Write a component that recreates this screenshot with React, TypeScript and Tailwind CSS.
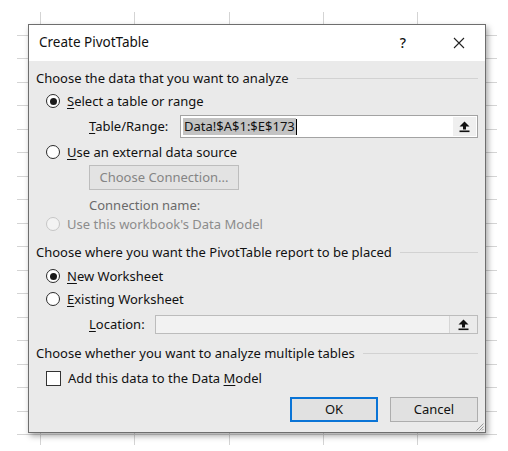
import type { ReactNode } from "react";

const COLS = [24, 94, 95, 94, 94, 79];
const ROWS = Array.from({ length: 19 }, (_, i) => i);

function Radio({ checked = false, disabled = false }: { checked?: boolean; disabled?: boolean }) {
    return (
        <span
            className={`flex h-[14px] w-[14px] shrink-0 items-center justify-center rounded-full ${
                disabled ? "border border-[#c6c6c6] bg-[#f3f3f3]" : "border-[1.5px] border-[#2b2b2b] bg-white"
            }`}
        >
            {checked && <span className="h-[7px] w-[7px] rounded-full bg-[#1a1a1a]" />}
        </span>
    );
}

function Key({ children }: { children: ReactNode }) {
    return <span className="underline decoration-1 underline-offset-[2px]">{children}</span>;
}

function Section({ label, mt }: { label: string; mt: string }) {
    return (
        <div className={`flex h-[18px] items-center gap-2 ${mt}`}>
            <span className="whitespace-nowrap">{label}</span>
            <span className="h-px flex-1 bg-[#d2d2d2]" />
        </div>
    );
}

function UploadIcon() {
    return (
        <svg width="11" height="12" viewBox="0 0 11 12" fill="#111">
            <polygon points="5.5,0.5 10.5,5.5 0.5,5.5" />
            <rect x="4" y="5" width="3" height="3.5" />
            <rect x="0.5" y="9.5" width="10" height="1.6" />
        </svg>
    );
}

export default function App() {
    return (
        <div
            className="relative h-[451px] w-[508px] overflow-hidden bg-white pt-[12px] pl-[17px] text-[13px] leading-none text-[#111]"
            style={{ fontFamily: '"Noto Sans", "Open Sans", sans-serif' }}
        >
            {/* spreadsheet behind the dialog */}
            <div className="grid h-[433px] w-[480px] grid-cols-[24px_94px_95px_94px_94px_79px] auto-rows-[23.5px] overflow-hidden bg-white">
                {ROWS.map((r) =>
                    COLS.map((_, c) => (
                        <div
                            key={`${r}-${c}`}
                            className={`border-b border-[#d4d4d4] ${c < COLS.length - 1 ? "border-r" : ""}`}
                        />
                    ))
                )}
            </div>

            {/* dialog */}
            <div className="absolute top-[24px] left-[28px] flex h-[409px] w-[458px] flex-col border border-[#6e6e6e] bg-[#eaeaea] shadow-[2px_3px_6px_rgba(0,0,0,0.35)]">
                <div className="flex h-[36px] shrink-0 items-center bg-white pl-[10px]">
                    <span className="text-[13.5px]">Create PivotTable</span>
                    <span className="ml-auto mr-[47px] text-[14px] font-medium">?</span>
                    <svg width="12" height="12" viewBox="0 0 12 12" className="mr-[20px]" stroke="#222" strokeWidth="1.1">
                        <path d="M1 1 11 11M11 1 1 11" />
                    </svg>
                </div>

                <div className="flex flex-1 flex-col px-[7px] pt-[8px]">
                    <Section label="Choose the data that you want to analyze" mt="" />

                    <div className="mt-[5px] ml-[10px] flex h-[18px] items-center gap-[7px]">
                        <Radio checked />
                        <span>
                            <Key>S</Key>elect a table or range
                        </span>
                    </div>

                    <div className="mt-[5px] flex h-[23px] items-center pl-[53px]">
                        <span className="w-[91px]">
                            <Key>T</Key>able/Range:
                        </span>
                        <div className="flex h-[23px] flex-1 items-stretch border border-[#a3a3a3] bg-white">
                            <div className="flex flex-1 items-center pl-[2px]">
                                <span className="flex h-[17px] items-center bg-[#c3c3c3] px-[1px] text-[#111]">Data!$A$1:$E$173</span>
                                <span className="h-[16px] w-px bg-black" />
                            </div>
                            <div className="m-[1px] flex w-[23px] items-center justify-center bg-[#efefef]">
                                <UploadIcon />
                            </div>
                        </div>
                    </div>

                    <div className="mt-[5px] ml-[10px] flex h-[18px] items-center gap-[7px]">
                        <Radio />
                        <span>
                            <Key>U</Key>se an external data source
                        </span>
                    </div>

                    <div className="mt-[4px] pl-[53px]">
                        <div className="flex h-[25px] w-[150px] items-center justify-center border border-[#bdbdbd] bg-[#e3e3e3] text-[#858585]">
                            Choose Connection...
                        </div>
                    </div>

                    <div className="mt-[6px] flex h-[18px] items-center pl-[53px] text-[#6a6a6a]">Connection name:</div>

                    <div className="mt-[1px] ml-[10px] flex h-[18px] items-center gap-[7px] text-[#8c8c8c]">
                        <Radio disabled />
                        <span>Use this workbook's Data Model</span>
                    </div>

                    <Section label="Choose where you want the PivotTable report to be placed" mt="mt-[10px]" />

                    <div className="mt-[6px] ml-[10px] flex h-[18px] items-center gap-[7px]">
                        <Radio checked />
                        <span>
                            <Key>N</Key>ew Worksheet
                        </span>
                    </div>

                    <div className="mt-[5px] ml-[10px] flex h-[18px] items-center gap-[7px]">
                        <Radio />
                        <span>
                            <Key>E</Key>xisting Worksheet
                        </span>
                    </div>

                    <div className="mt-[7px] flex h-[19px] items-center pl-[53px]">
                        <span className="w-[66px]">
                            <Key>L</Key>ocation:
                        </span>
                        <div className="flex h-[19px] flex-1 items-stretch border border-[#bcbcbc] bg-[#f2f2f2]">
                            <div className="flex-1" />
                            <div className="flex w-[28px] items-center justify-center border-l border-[#d6d6d6] bg-[#ebebeb]">
                                <UploadIcon />
                            </div>
                        </div>
                    </div>

                    <Section label="Choose whether you want to analyze multiple tables" mt="mt-[10px]" />

                    <div className="mt-[7px] ml-[10px] flex h-[18px] items-center gap-[7px]">
                        <span className="h-[15px] w-[15px] shrink-0 border border-[#333] bg-white" />
                        <span>
                            Add this data to the Data <Key>M</Key>odel
                        </span>
                    </div>

                    <div className="mt-[10px] flex justify-end gap-[12px]">
                        <button className="flex h-[25px] w-[88px] items-center justify-center border-2 border-[#0a74d6] bg-[#e1e1e1]">
                            OK
                        </button>
                        <button className="flex h-[25px] w-[88px] items-center justify-center border border-[#adadad] bg-[#e1e1e1]">
                            Cancel
                        </button>
                    </div>
                </div>

                {/* resize grip */}
                <svg width="9" height="9" viewBox="0 0 9 9" className="absolute right-[1px] bottom-[1px]" stroke="#9a9a9a" strokeWidth="1">
                    <path d="M8.5 1.5 1.5 8.5M8.5 4.5 4.5 8.5M8.5 7 7 8.5" />
                </svg>
            </div>
        </div>
    );
}
